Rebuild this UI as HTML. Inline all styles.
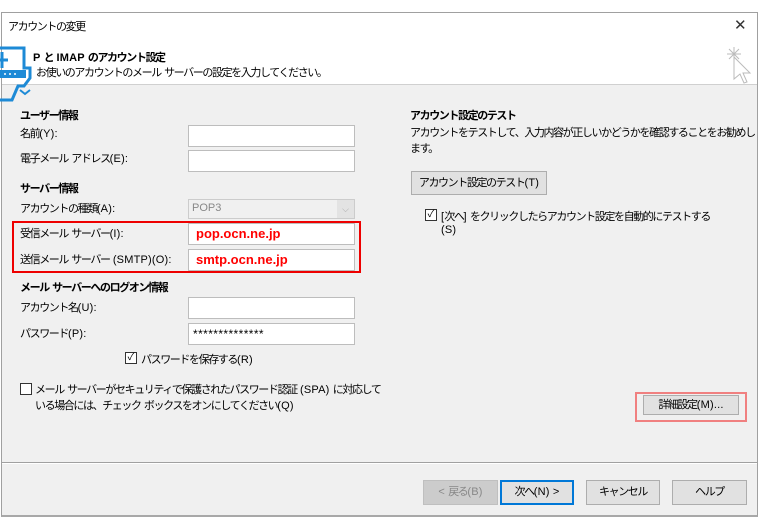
<!DOCTYPE html>
<html><head><meta charset="utf-8"><style>
body{margin:0;width:760px;height:530px;background:#fff;position:relative;overflow:hidden;font-family:"Liberation Sans","Noto Sans CJK JP",sans-serif;font-size:11px;letter-spacing:-1.4px;color:#000}
.a{position:absolute;white-space:nowrap}
.b{font-weight:bold}
i{font-style:normal;letter-spacing:0.2px}
.in{position:absolute;background:#fff;border:1px solid #bdbdbd;box-sizing:border-box;letter-spacing:0}
.btn{position:absolute;background:#e1e1e1;border:1px solid #adadad;box-sizing:border-box;text-align:center;white-space:nowrap}
.cb{position:absolute;width:12px;height:12px;border:1px solid #333;background:#fff;box-sizing:border-box;letter-spacing:0}
</style></head><body>
<div class="a" style="left:1px;top:12px;width:757px;height:505px;border:1px solid #a0a0a0;border-bottom:2px solid #a8a8a8;box-sizing:border-box;background:#f0f0f0"></div>
<div class="a" style="left:2px;top:13px;width:755px;height:71px;background:#fff;border-bottom:1px solid #d0d0d0"></div>
<div class="a" style="left:8px;top:18px">アカウントの変更</div>
<div class="a" style="left:734px;top:16px;font-size:15px;color:#333;letter-spacing:0">✕</div>
<svg class="a" style="left:0;top:42px" width="34" height="60" viewBox="0 0 34 60"><path d="M0 6H24V26H30V36L24 44H18L12 58H0" fill="none" stroke="#1d8ad6" stroke-width="3"/><path d="M2 10V26M-2 18H8" stroke="#1d8ad6" stroke-width="3"/><rect x="0" y="28" width="26" height="8" fill="#1d8ad6"/><circle cx="5" cy="32" r="1" fill="#fff"/><circle cx="10" cy="32" r="1" fill="#fff"/><circle cx="15" cy="32" r="1" fill="#fff"/><path d="M20 48l5 4 5-4" fill="none" stroke="#1d8ad6" stroke-width="2"/></svg>
<svg class="a" style="left:722px;top:45px" width="30" height="40"><g stroke="#bbb" fill="none"><path d="M12 2v14M5 9h14M7 4l10 10M17 4L7 14"/><path d="M12 12v22l6-5 4 9 3-1-4-9h7z" fill="#fff"/></g></svg>
<div class="a b" style="left:33px;top:49px"><i>P </i>と<i> IMAP </i>のアカウント設定</div>
<div class="a" style="left:36px;top:64px">お使いのアカウントのメール<i> </i>サーバーの設定を入力してください。</div>

<div class="a b" style="left:20px;top:107px">ユーザー情報</div>
<div class="a" style="left:20px;top:125px">名前<i>(Y):</i></div>
<div class="in" style="left:188px;top:125px;width:167px;height:22px"></div>
<div class="a" style="left:20px;top:150px">電子メール<i> </i>アドレス<i>(E):</i></div>
<div class="in" style="left:188px;top:150px;width:167px;height:22px"></div>
<div class="a b" style="left:20px;top:180px">サーバー情報</div>
<div class="a" style="left:20px;top:200px">アカウントの種類<i>(A):</i></div>
<div class="in" style="left:188px;top:199px;width:167px;height:20px;background:#f0f0f0;border-color:#ccc;color:#888;padding:2px 3px">POP3<span style="position:absolute;right:0;top:0;width:17px;height:18px;background:#e3e3e3;color:#aaa;font-size:9px;text-align:center;line-height:18px">⌵</span></div>
<div class="a" style="left:12px;top:221px;width:349px;height:52px;border:2px solid #e00;box-sizing:border-box"></div>
<div class="a" style="left:20px;top:225px">受信メール<i> </i>サーバー<i>(I):</i></div>
<div class="in" style="left:188px;top:223px;width:167px;height:22px;color:#f00;font-weight:bold;font-size:13px;padding:2px 7px">pop.ocn.ne.jp</div>
<div class="a" style="left:20px;top:251px">送信メール<i> </i>サーバー<i> (SMTP)(O):</i></div>
<div class="in" style="left:188px;top:249px;width:167px;height:22px;color:#f00;font-weight:bold;font-size:13px;padding:2px 7px">smtp.ocn.ne.jp</div>
<div class="a b" style="left:20px;top:279px">メール<i> </i>サーバーへのログオン情報</div>
<div class="a" style="left:20px;top:299px">アカウント名<i>(U):</i></div>
<div class="in" style="left:188px;top:297px;width:167px;height:22px"></div>
<div class="a" style="left:20px;top:325px">パスワード<i>(P):</i></div>
<div class="in" style="left:188px;top:323px;width:167px;height:22px;padding:3px 4px;font-size:12px;letter-spacing:0.4px">**************</div>
<div class="cb" style="left:125px;top:352px;font-size:10px;line-height:10px;text-align:center">✓</div>
<div class="a" style="left:141px;top:351px">パスワードを保存する<i>(R)</i></div>
<div class="cb" style="left:20px;top:383px"></div>
<div class="a" style="left:35px;top:381px">メール<i> </i>サーバーがセキュリティで保護されたパスワード認証<i> (SPA) </i>に対応して</div>
<div class="a" style="left:35px;top:397px">いる場合には、チェック<i> </i>ボックスをオンにしてください<i>(Q)</i></div>

<div class="a b" style="left:410px;top:107px">アカウント設定のテスト</div>
<div class="a" style="left:410px;top:124px">アカウントをテストして、入力内容が正しいかどうかを確認することをお勧めし</div>
<div class="a" style="left:410px;top:140px">ます。</div>
<div class="btn" style="left:411px;top:171px;width:136px;height:24px;line-height:22px">アカウント設定のテスト<i>(T)</i></div>
<div class="cb" style="left:425px;top:209px;font-size:10px;line-height:10px;text-align:center">✓</div>
<div class="a" style="left:441px;top:208px"><i>[</i>次へ<i>] </i>をクリックしたらアカウント設定を自動的にテストする</div>
<div class="a" style="left:441px;top:224px"><i>(S)</i></div>
<div class="a" style="left:635px;top:392px;width:112px;height:30px;border:2px solid #f08080;box-sizing:border-box"></div>
<div class="btn" style="left:643px;top:395px;width:96px;height:20px;line-height:18px">詳細設定<i>(M)...</i></div>

<div class="a" style="left:2px;top:462px;width:755px;height:1px;background:#a0a0a0"></div>
<div class="a" style="left:2px;top:463px;width:755px;height:1px;background:#fff"></div>
<div class="btn" style="left:423px;top:480px;width:75px;height:25px;line-height:23px;background:#ccc;border-color:#bfbfbf;color:#888"><i>&lt; </i>戻る<i>(B)</i></div>
<div class="btn" style="left:500px;top:480px;width:74px;height:25px;line-height:21px;border:2px solid #0078d7">次へ<i>(N) &gt;</i></div>
<div class="btn" style="left:586px;top:480px;width:74px;height:25px;line-height:23px">キャンセル</div>
<div class="btn" style="left:672px;top:480px;width:75px;height:25px;line-height:23px">ヘルプ</div>
</body></html>
